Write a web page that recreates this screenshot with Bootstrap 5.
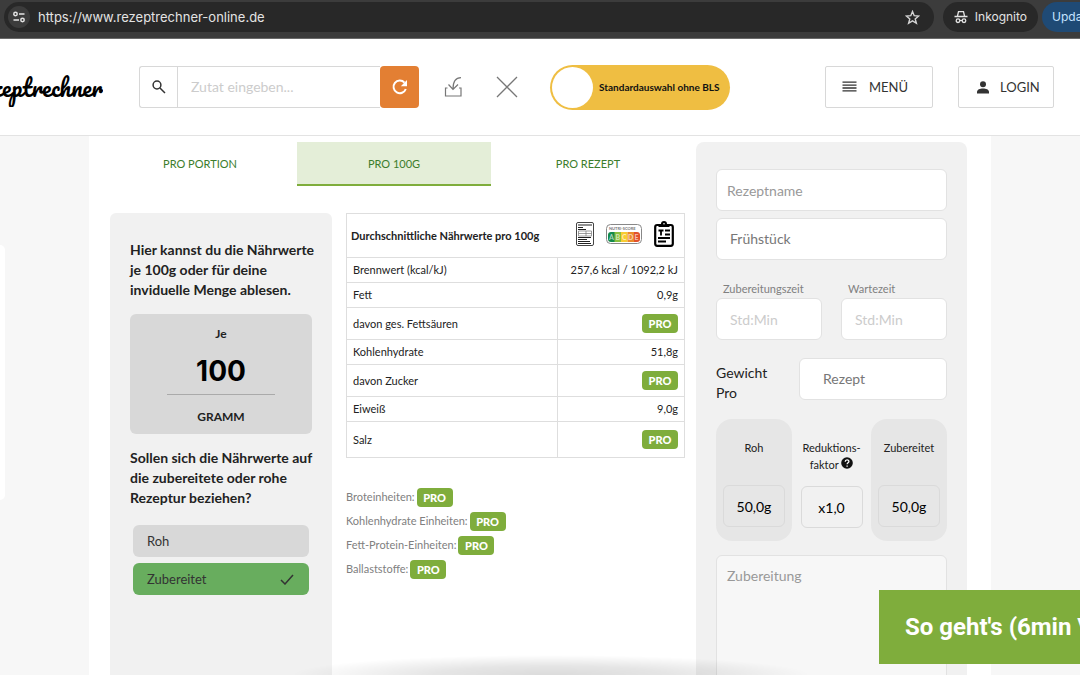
<!DOCTYPE html>
<html lang="de">
<head>
<meta charset="utf-8">
<meta name="viewport" content="width=device-width, initial-scale=1">
<title>Rezeptrechner</title>
<link href="https://cdn.jsdelivr.net/npm/bootstrap@5.3.0/dist/css/bootstrap.min.css" rel="stylesheet">
<style>
body{font-family:Lato,sans-serif;font-size:14px;line-height:20px;color:#222;background:#f7f7f7;height:100vh;overflow:hidden}
button,input,select,textarea{font-family:inherit}
svg{display:block;flex:none}
/* browser bar */
.browser{background:#3c3c3c;height:39px;padding:2px 0 6px 4px;gap:9px;border-bottom:1px solid #6a6a6a;font:13px/18px Inter,sans-serif;color:#e3e3e3}
.omni{background:#282828;border-radius:15px;height:30px;padding:0 14px 0 4px}
.omni .site{width:22px;height:22px;border-radius:50%;background:#3c3c3c;border:0;padding:0}
.omni input{background:none;border:0;color:#e3e3e3;outline:0;font-size:13px;padding:0}
.incog{background:#282828;border-radius:15px;height:30px;padding:0 11px;gap:7px;font-size:12px}
.upd{background:#1f4a75;color:#c5e3ff;border:0;border-radius:15px 0 0 15px;height:30px;width:38px;padding:0 0 0 10px;margin-left:-5px;text-align:left;overflow:hidden;font-size:12px}
/* site header */
.top{background:#fff;height:97px;border-bottom:1px solid #e3e3e3;padding-right:26px}
.brand{width:103px;margin-right:36px;overflow:hidden;font:400 23px/40px Pacifico,cursive;color:#000;text-decoration:none}
.search{width:241px;height:42px;border:1px solid #d8d8d8;border-right:0;border-radius:3px 0 0 3px}
.search label{width:38px;border-right:1px solid #d8d8d8}
.search input{border:0;outline:0;padding:0 13px;font-size:14px;min-width:0}
.search input::placeholder{color:#ccc}
.reload{width:39px;height:42px;background:#e37f33;border:0;border-radius:4px}
.plain{background:none;border:0;padding:0}
.tools{gap:33px;margin:0 32px 0 25px}
.bls{width:180px;height:45px;border-radius:23px;background:#efbe42;padding:2px;font-size:10px;font-weight:700;color:#111;cursor:pointer}
.bls input{appearance:none;width:41px;height:41px;border-radius:50%;background:#fff;margin:0 6px 0 0}
.hbtn{height:42px;border:1px solid #d8d8d8;border-radius:2px;background:#fff;color:#333;font-size:13px;padding:0 16px}
.hbtn.menu{width:108px;gap:12px;margin-right:25px}
.hbtn.login{width:96px;gap:10px;padding:0 15px 0 17px}
/* content */
.sheet{background:#fff;max-width:902px;width:100%;min-height:0;overflow:hidden;padding:6px 24px 0 14px;gap:11px}
.peek{left:0;top:245px;width:5px;height:255px;border-radius:0 5px 5px 0;background:#fff}
.tabs button{flex:1 1 0;height:44px;background:none;border:0;border-bottom:2px solid transparent;color:#3c7d2c;font-size:11px;padding-top:3px}
.tabs button.on{background:#e4eed8;border-color:#7fad3c}
.panels{gap:14px;margin-top:27px}
.side{width:222px;margin-left:7px;background:#f1f1f1;border-radius:6px 6px 0 0;padding:27px 20px 0;height:600px}
.side p{font-weight:700;margin:0 -6px 0 0}
.amount{background:#d8d8d8;border-radius:6px;height:120px;margin:14px 0;padding-top:10px;font-size:12px;font-weight:700}
.amount input{width:108px;height:51px;border:0;border-bottom:1px solid #aaa;background:none;text-align:center;font:700 28px/34px Inter,sans-serif;color:#000;padding:4px 0 0}
.pick{height:32px;border-radius:6px;background:#d8d8d8;font-size:13px;color:#333;padding:0 15px 0 14px;margin:0 3px 6px 3px;cursor:pointer}
.question{margin-bottom:17px!important}
.pick svg{display:none}
.btn-check:checked + .pick{background:#68ad5e}
.btn-check:checked + .pick svg{display:block}
.facts{width:100%;border:1px solid #dedede;border-collapse:collapse;font-size:11px;line-height:16px}
.facts tr{height:25px}.facts tr.tall{height:32px}.facts tr.last{height:36px}.facts thead tr{height:44px}
.facts td,.facts tbody th{border:1px solid #dedede;font-weight:400;padding:0 6px}
.facts tbody td{text-align:right;width:127px}
.facts thead th{padding:0 10px 4px 4px}
.facts thead span{padding-top:4px}
.pro{display:inline-block;height:19px;width:36px;border:0;border-radius:4px;background:#7fad3c;color:#fff;font-size:11px;line-height:19px;font-weight:900;text-align:center;padding:0}
.extra{font-size:11px;line-height:24px;color:#808080;margin-top:27px}
.extra li{height:24px;display:flex;align-items:center;gap:2px}
/* recipe form */
.recipe{width:271px;background:#f1f1f1;border-radius:8px 8px 0 0;padding:27px 20px 0;height:700px}
.box{display:block;width:100%;height:42px;border:1px solid #e2e2e2;border-radius:6px;background:#fff;font-size:14px;color:#777;padding:0 10px;appearance:none;outline:0}
.box::placeholder{color:#999;opacity:1}
.box.wide{padding:0 13px}
.box.time::placeholder{color:#ccc}
.category{margin:7px 0 20px}
.duration{width:106px}
.tlabel{font-size:11px;line-height:18px;color:#808080;padding-left:7px;display:block}
.per{margin:18px 0 16px}
.per label{width:60px;padding-top:5px}
.per .box{width:148px;padding-left:23px}
.wt{width:76px;height:122px;border-radius:16px;background:#e6e6e6;padding:20px 7px 0;font-size:11px;line-height:17px}
.wt label{height:46px;text-align:center;display:block}
.wt.mid{background:none;width:78px;padding:20px 8px 0}
.wt.mid label{height:47px;margin:0 -6px}
.wt .box{background:none;border-color:#dadada;text-align:center;color:#000;padding:0}
textarea.box{height:200px;background:#f7f7f7;padding:10px;resize:none}
.weights{margin:0 0 14px}
.video{right:0;bottom:11px;width:201px;height:74px;background:#7fad3c;color:#fff;border:0;padding:0 0 0 26px;overflow:hidden;white-space:nowrap;text-align:left;font:700 24px/30px Roboto,sans-serif}
.shade{left:27%;right:25%;bottom:0;height:20px;background:radial-gradient(ellipse 50% 100% at 50% 100%,rgba(0,0,0,.14),rgba(0,0,0,.1) 45%,rgba(0,0,0,0));pointer-events:none}
</style>
</head>
<body class="d-flex flex-column">
<div class="browser d-flex align-items-center flex-shrink-0">
  <div class="omni d-flex align-items-center flex-grow-1">
    <button class="site d-flex align-items-center justify-content-center" aria-label="Website-Informationen"><svg width="12" height="12" viewBox="0 0 12 12" fill="none" stroke="#e3e3e3" stroke-width="1.5"><circle cx="2.5" cy="3" r="1.7"/><path d="M6 3h5.500M.5 9H6"/><circle cx="9.500" cy="9" r="1.700"/></svg></button>
    <input class="flex-grow-1 ms-2" aria-label="Adresse" value="https://www.rezeptrechner-online.de">
    <button class="plain" aria-label="Lesezeichen"><svg width="15" height="15" viewBox="0 0 15 15" fill="none" stroke="#d5d5d5" stroke-width="1.4"><path d="M7.5 1.500l1.700 4.200 4.500.3-3.500 2.900 1.200 4.400-3.900-2.400-3.900 2.400 1.200-4.400L1.300 6l4.500-.3z"/></svg></button>
  </div>
  <div class="incog d-flex align-items-center"><svg width="14" height="14" viewBox="0 0 14 14" fill="none" stroke="#e3e3e3" stroke-width="1.300"><path d="M3.500 6l1-4.300h5L10.500 6M.500 6.500h13"/><circle cx="4" cy="10.700" r="1.800"/><circle cx="10" cy="10.700" r="1.800"/><path d="M5.800 10.500h2.400"/></svg><span>Inkognito</span></div>
  <button class="upd">Update</button>
</div>
<header class="top d-flex align-items-center flex-shrink-0">
  <a class="brand d-flex justify-content-end" href="#">Rezeptrechner</a>
  <div class="search d-flex"><label for="q" class="d-flex align-items-center justify-content-center flex-shrink-0"><svg width="14" height="14" viewBox="0 0 14 14" fill="none" stroke="#333" stroke-width="1.500"><circle cx="5" cy="5" r="3.900"/><path d="M8 8l5 5"/></svg></label><input id="q" class="flex-grow-1" placeholder="Zutat eingeben..."></div>
  <button class="reload d-flex align-items-center justify-content-center" aria-label="Neu laden"><svg width="16" height="16" viewBox="0 0 16 16"><path d="M13.800 10A6.300 6.300 0 1 1 12.500 3.600" fill="none" stroke="#fff" stroke-width="2"/><path d="M15 1v6.200H8.800z" fill="#fff"/></svg></button>
  <div class="tools d-flex align-items-center">
    <button class="plain" aria-label="Importieren"><svg width="19" height="20" viewBox="0 0 19 20" fill="none" stroke="#777" stroke-width="1.200"><path d="M3.500 11H1.500v8h15.500v-8h-2M17 .600c-5.500 0-8 4-8 11.400M4.500 7.500l4.500 5 5-5"/></svg></button>
    <button class="plain" aria-label="Löschen"><svg width="22" height="22" viewBox="0 0 22 22" fill="none" stroke="#777" stroke-width="1.300"><path d="M1 1l20 20M21 1L1 21"/></svg></button>
  </div>
  <label class="bls d-flex align-items-center"><input type="checkbox" role="switch">Standardauswahl ohne BLS</label>
  <button class="hbtn menu d-flex align-items-center ms-auto"><svg width="15" height="12" viewBox="0 0 15 12" stroke="#333" stroke-width="1.300"><path d="M.500 1.200h14M.500 4.100h14M.500 7h14M.500 9.900h14"/></svg><span>MENÜ</span></button>
  <button class="hbtn login d-flex align-items-center"><svg width="14" height="13" viewBox="0 0 14 13" fill="#333"><circle cx="7" cy="3.300" r="3"/><path d="M1 12.500V11c0-2.500 3-3.500 6-3.500s6 1 6 3.500v1.500z"/></svg><span>LOGIN</span></button>
</header>
<main class="sheet d-flex mx-auto flex-grow-1">
  <section class="flex-grow-1">
    <nav class="tabs d-flex"><button>PRO PORTION</button><button class="on" aria-current="true">PRO 100G</button><button>PRO REZEPT</button></nav>
    <div class="panels d-flex">
      <aside class="side flex-shrink-0">
        <p>Hier kannst du die Nährwerte je 100g oder für deine inviduelle Menge ablesen.</p>
        <div class="amount d-flex flex-column align-items-center"><label for="menge">Je</label><input id="menge" value="100"><span class="mt-2 pt-1">GRAMM</span></div>
        <p class="question">Sollen sich die Nährwerte auf die zubereitete oder rohe Rezeptur beziehen?</p>
        <input class="btn-check" type="radio" name="art" id="roh"><label class="pick d-flex align-items-center justify-content-between" for="roh">Roh<svg width="14" height="11" viewBox="0 0 14 11"><path d="M1 6l4 4 8-9" fill="none" stroke="#333" stroke-width="1.500"/></svg></label>
        <input class="btn-check" type="radio" name="art" id="zub" checked><label class="pick d-flex align-items-center justify-content-between" for="zub">Zubereitet<svg width="14" height="11" viewBox="0 0 14 11"><path d="M1 6l4 4 8-9" fill="none" stroke="#333" stroke-width="1.500"/></svg></label>
      </aside>
      <div class="flex-grow-1">
        <table class="facts">
          <thead><tr><th colspan="2"><div class="d-flex align-items-center"><span class="me-auto">Durchschnittliche Nährwerte pro 100g</span>
            <svg width="18" height="24" viewBox="0 0 18 24"><rect x=".5" y=".5" width="17" height="23" rx="1.500" fill="#fff" stroke="#444"/><path d="M2 3h14M2 5.500h5M2 7.500h8M2 15.500h13M2 17.500h9M2 19.500h12M2 21.500h13" stroke="#222" stroke-width="1.200"/><path d="M2.500 9h13v5h-13zM2.500 11.500h13M10 9v5" fill="none" stroke="#777" stroke-width=".7"/></svg>
            <svg class="mx-2 px-1" width="44" height="20" viewBox="0 0 36 20"><rect x=".5" y=".5" width="35" height="19" rx="4" fill="#fff" stroke="#888"/><text x="3" y="6" font-size="4" font-weight="700" fill="#777">NUTRI-SCORE</text><path d="M5 8h4v10H5a3 3 0 0 1-3-3v-4a3 3 0 0 1 3-3z" fill="#138a4b"/><path d="M8.500 8h6.500v10H8.500z" fill="#8abf3e"/><path d="M15 8h6.500v10H15z" fill="#f8cc32"/><path d="M21.500 8H28v10h-6.500z" fill="#ec8b2b"/><path d="M28 8h3a3 3 0 0 1 3 3v4a3 3 0 0 1-3 3h-3z" fill="#e2502b"/><g fill="#fff" fill-opacity=".65" font-size="7" text-anchor="middle"><text x="5.500" y="15.500">A</text><text x="11.800" y="15.500">B</text><text x="18.200" y="15.500">C</text><text x="24.700" y="15.500">D</text><text x="30.500" y="15.500">E</text></g></svg>
            <svg width="20" height="26" viewBox="0 0 20 26"><rect x="1.200" y="4" width="17.600" height="20.800" rx="2" fill="#fff" stroke="#000" stroke-width="2.200"/><path d="M4.500 6V3H7a3 3 0 0 1 6 0h2.500v3z"/><circle cx="10" cy="2.800" r=".8" fill="#fff"/><path d="M4.500 9.500h5M7 9.500v5M11 9.500h5M11 13.500h5M4 17h12M4 20.500h8" stroke="#000" stroke-width="1.800"/></svg></div></th></tr></thead>
          <tbody>
            <tr><th>Brennwert (kcal/kJ)</th><td>257,6 kcal / 1092,2 kJ</td></tr>
            <tr><th>Fett</th><td>0,9g</td></tr>
            <tr class="tall"><th>davon ges. Fettsäuren</th><td><button class="pro">PRO</button></td></tr>
            <tr><th>Kohlenhydrate</th><td>51,8g</td></tr>
            <tr class="tall"><th>davon Zucker</th><td><button class="pro">PRO</button></td></tr>
            <tr><th>Eiweiß</th><td>9,0g</td></tr>
            <tr class="last"><th>Salz</th><td><button class="pro">PRO</button></td></tr>
          </tbody>
        </table>
        <ul class="extra list-unstyled">
          <li>Broteinheiten: <button class="pro">PRO</button></li><li>Kohlenhydrate Einheiten: <button class="pro">PRO</button></li><li>Fett-Protein-Einheiten: <button class="pro">PRO</button></li><li>Ballaststoffe: <button class="pro">PRO</button></li>
        </ul>
      </div>
    </div>
  </section>
  <form class="recipe flex-shrink-0">
    <input class="box" aria-label="Rezeptname" placeholder="Rezeptname">
    <select class="box wide category" aria-label="Kategorie"><option>Frühstück</option></select>
    <div class="d-flex justify-content-between">
      <div class="duration"><label class="tlabel" for="t1">Zubereitungszeit</label><input id="t1" class="box wide time" placeholder="Std:Min"></div>
      <div class="duration"><label class="tlabel" for="t2">Wartezeit</label><input id="t2" class="box wide time" placeholder="Std:Min"></div>
    </div>
    <div class="per d-flex justify-content-between"><label for="gp">Gewicht Pro</label><select id="gp" class="box"><option>Rezept</option></select></div>
    <div class="weights d-flex justify-content-between">
      <div class="wt"><label for="w1">Roh</label><input id="w1" class="box" value="50,0g"></div>
      <div class="wt mid"><label for="w2">Reduktions-<br>faktor <svg class="d-inline-block align-baseline" width="12" height="12" viewBox="0 0 12 12"><circle cx="6" cy="6" r="5.800" fill="#111"/><path d="M4.200 4.700c0-2.400 3.700-2.300 3.700-.2 0 1.300-1.800 1.300-1.800 2.700M6.100 8.500v1.300" fill="none" stroke="#fff" stroke-width="1.300"/></svg></label><input id="w2" class="box" value="x1,0"></div>
      <div class="wt"><label for="w3">Zubereitet</label><input id="w3" class="box" value="50,0g"></div>
    </div>
    <textarea class="box" aria-label="Zubereitung" placeholder="Zubereitung"></textarea>
  </form>
</main>
<div class="peek position-fixed"></div>
<div class="shade position-fixed"></div>
<button class="video position-fixed">So geht's (6min Video)</button>
<script src="https://cdn.jsdelivr.net/npm/bootstrap@5.3.0/dist/js/bootstrap.bundle.min.js"></script>
</body>
</html>
